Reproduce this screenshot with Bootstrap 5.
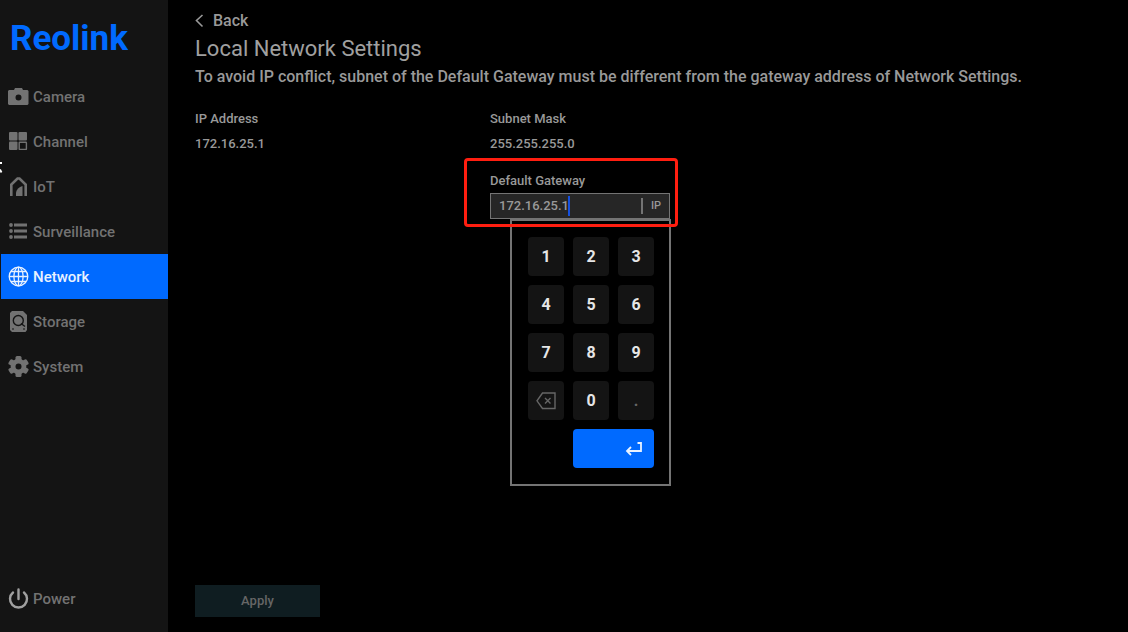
<!DOCTYPE html>
<html lang="en" data-bs-theme="dark">
<head>
<meta charset="utf-8">
<meta name="viewport" content="width=device-width, initial-scale=1">
<title>Reolink - Local Network Settings</title>
<link href="https://cdn.jsdelivr.net/npm/bootstrap@5.3.0/dist/css/bootstrap.min.css" rel="stylesheet">
<style>
  body { background: #000; color: #999; font-family: Roboto, "Liberation Sans", sans-serif; font-weight: 500; font-size: 13px; line-height: 20px; }
  .sidebar { width: 168px; background: #141414; padding-bottom: 11px; }
  .brand { height: 74px; padding: 19px 0 0 10px; color: #006aff; font-size: 35px; font-weight: 700; line-height: 40px; text-decoration: none; }
  .side-link { display: flex; align-items: center; gap: 4px; height: 45px; padding: 0 0 0 8px; border-radius: 0; color: #727272; font-size: 15px; }
  .side-link:hover { color: #999; }
  .side-link.active { background: #006aff; color: #e8f2ff; margin-left: 1px; padding-left: 7px; }
  .side-link svg { width: 21px; height: 21px; flex: none; }
  .settings { padding: 9px 27px 15px; }
  .back-link { gap: 9px; color: #999; font-size: 16px; line-height: 24px; }
  .settings h1 { margin: 0; color: #a0a0a0; font-size: 22px; line-height: 32px; font-weight: 400; }
  .hint { margin: 0; font-size: 16px; line-height: 24px; }
  .fields { display: grid; grid-template-columns: 295px 180px; margin: 20px 0 0; }
  .fields dt, .fields dd { margin: 0 0 5px; font-weight: 500; }
  .gateway { grid-column: 2; position: relative; margin-top: 17px; }
  .gateway label { display: block; line-height: 20px; margin-bottom: 2px; }
  .ip-box { height: 26px; background: #262626; border: 1px solid #747474; }
  .ip-box input { width: 150px; background: none; border: 0; outline: 0; padding: 0 0 0 8px; color: #999; font-size: 13px; font-weight: 500; }
  .caret { position: absolute; left: 78px; top: 25px; width: 2px; height: 20px; background: #1550e0; }
  .ip-tag { border-left: 2px solid #747474; padding: 0 8px; height: 16px; line-height: 16px; font-size: 11px; }
  .highlight { position: absolute; inset: -13px -8px -8px -26px; border: 3px solid #ff1e10; border-radius: 4px; z-index: 3; pointer-events: none; }
  .keypad { position: absolute; left: 20px; top: 100%; display: grid; grid-template-columns: repeat(3, 36px); gap: 9px; padding: 16px 15px 16px 16px; border: 2px solid #747474; background: #000; z-index: 2; }
  .keypad button { height: 39px; padding: 0; border: 0; border-radius: 4px; background: #141414; color: #e6e6e6; font-size: 16px; font-weight: 700; line-height: 24px; }
  .keypad .dim { color: #666; }
  .keypad .enter { grid-column: 2 / 4; padding-right: 10px; background: #006aff; }
  .apply { width: 125px; height: 32px; border: 0; border-radius: 0; padding: 0; background: #0f1d21; color: #666; font-size: 13px; font-weight: 500; }
  .pointer { position: absolute; left: 0; top: 161px; }
</style>
</head>
<body>
<div class="d-flex min-vh-100">
  <aside class="sidebar d-flex flex-column flex-shrink-0">
    <a class="brand d-block" href="#">Reolink</a>
    <nav class="nav flex-column flex-nowrap flex-grow-1">
      <a class="nav-link side-link" href="#"><svg viewBox="0 0 21 21" fill="currentColor"><path fill-rule="evenodd" d="M7 2h7l1 2h4.500l1 1v13l-1 1h-18.500l-1-1V5l1-1H6zM10.500 8.500a3 3 0 1 0 0 6 3 3 0 0 0 0-6z"/></svg>Camera</a>
      <a class="nav-link side-link" href="#"><svg viewBox="0 0 21 21" fill="currentColor"><rect x="1" y="1" width="8.500" height="8.500" rx="1"/><rect x="10.500" y="1" width="8.500" height="8.500" rx="1"/><rect x="1" y="10.500" width="8.500" height="8.500" rx="1"/><rect x="11.200" y="11.200" width="7.200" height="7.200" rx=".5" fill="none" stroke="currentColor" stroke-width="1.400"/></svg>Channel</a>
      <a class="nav-link side-link" href="#"><svg viewBox="0 0 21 21"><path d="M3.300 20V8.500L9.500 2.500h2L17.700 8.500V20" fill="none" stroke="currentColor" stroke-width="2.600"/><path d="M8 20v-3.500q1-5 6.500-6.500v10z" fill="currentColor"/></svg>IoT</a>
      <a class="nav-link side-link" href="#"><svg viewBox="0 0 21 21" fill="currentColor"><circle cx="3" cy="4" r="1.900"/><circle cx="3" cy="10" r="1.900"/><circle cx="3" cy="16" r="1.900"/><path d="M6 2.500h13v3H6zM6 8.500h13v3H6zM6 14.500h13v3H6z"/></svg>Surveillance</a>
      <a class="nav-link side-link active" aria-current="page" href="#"><svg viewBox="0 0 21 21" fill="none" stroke="currentColor" stroke-width="1.300"><circle cx="10.500" cy="10.500" r="9.300"/><ellipse cx="10.500" cy="10.500" rx="4.600" ry="9.300"/><path d="M10.500 1v19M1 10.500h19M2.800 5.500h15.400M2.800 15.500h15.400"/></svg>Network</a>
      <a class="nav-link side-link" href="#"><svg viewBox="0 0 21 21"><path d="M4 0h11l4 4v15l-1.500 2H4l-2-2V2z" fill="currentColor"/><g fill="none" stroke="#141414" stroke-width="1.400"><circle cx="10.300" cy="9.500" r="5"/><path d="M13 12.500l4 3"/></g><path d="M4 17.500h2v1H4zM15 17.500h2v1h-2z" fill="#141414"/></svg>Storage</a>
      <a class="nav-link side-link" href="#"><svg viewBox="0 0 21 21"><g fill="currentColor"><circle cx="10.500" cy="10.500" r="7.800"/><rect x="7.500" y="0" width="6" height="21" rx="1.500"/><rect x="7.500" y="0" width="6" height="21" rx="1.500" transform="rotate(60 10.500 10.500)"/><rect x="7.500" y="0" width="6" height="21" rx="1.500" transform="rotate(120 10.500 10.500)"/></g><circle cx="10.500" cy="10.500" r="3" fill="#141414"/></svg>System</a>
    </nav>
    <a class="nav-link side-link" href="#"><svg viewBox="0 0 21 21" fill="none" stroke="#a0a0a0" stroke-width="2.400" stroke-linecap="round"><path d="M10.500 1.500v9.500M5 4.500a8.500 8.500 0 1 0 11 0"/></svg>Power</a>
  </aside>

  <main class="settings d-flex flex-column flex-grow-1">
    <a class="back-link d-inline-flex align-items-center align-self-start text-decoration-none" href="#"><svg width="9" height="14" viewBox="0 0 9 14" fill="none" stroke="currentColor" stroke-width="1.600"><path d="M7.500 1L1.500 6.500l6 6"/></svg>Back</a>
    <h1>Local Network Settings</h1>
    <p class="hint">To avoid IP conflict, subnet of the Default Gateway must be different from the gateway address of Network Settings.</p>

    <form class="flex-grow-1 d-flex flex-column">
      <div class="fields">
        <dl class="m-0"><dt>IP Address</dt><dd class="m-0">172.16.25.1</dd></dl>
        <dl class="m-0"><dt>Subnet Mask</dt><dd class="m-0">255.255.255.0</dd></dl>
        <div class="gateway">
          <label for="gateway">Default Gateway</label>
          <div class="ip-box d-flex align-items-center">
            <input id="gateway" type="text" value="172.16.25.1" inputmode="numeric">
            <span class="ip-tag">IP</span>
          </div>
          <span class="caret"></span>
          <div class="highlight"></div>
          <div class="keypad">
            <button type="button">1</button><button type="button">2</button><button type="button">3</button>
            <button type="button">4</button><button type="button">5</button><button type="button">6</button>
            <button type="button">7</button><button type="button">8</button><button type="button">9</button>
            <button type="button" class="dim" aria-label="Backspace"><svg width="20" height="18" viewBox="0 0 20 18" fill="none" stroke="currentColor" stroke-width="1.400"><path d="M6.500 1H19v15.500H6.500L1 8.800zM9 6l5.500 5.500M14.500 6l-5.500 5.500"/></svg></button>
            <button type="button">0</button>
            <button type="button" class="dim">.</button>
            <button type="button" class="enter text-end" aria-label="Enter"><svg width="20" height="16" viewBox="0 0 20 16" fill="none" stroke="#e8f2ff" stroke-width="1.800"><path d="M13.500 2H17v8H3M7 6l-4 4 4 4"/></svg></button>
          </div>
        </div>
      </div>
      <button type="button" class="btn apply mt-auto">Apply</button>
    </form>
  </main>
</div>
<svg class="pointer" width="3" height="13" viewBox="0 0 3 13" fill="none" stroke="#fff" stroke-width="1.800"><path d="M0 2h2M0 8.500l1.500 3"/></svg>
<script src="https://cdn.jsdelivr.net/npm/bootstrap@5.3.0/dist/js/bootstrap.bundle.min.js"></script>
</body>
</html>
